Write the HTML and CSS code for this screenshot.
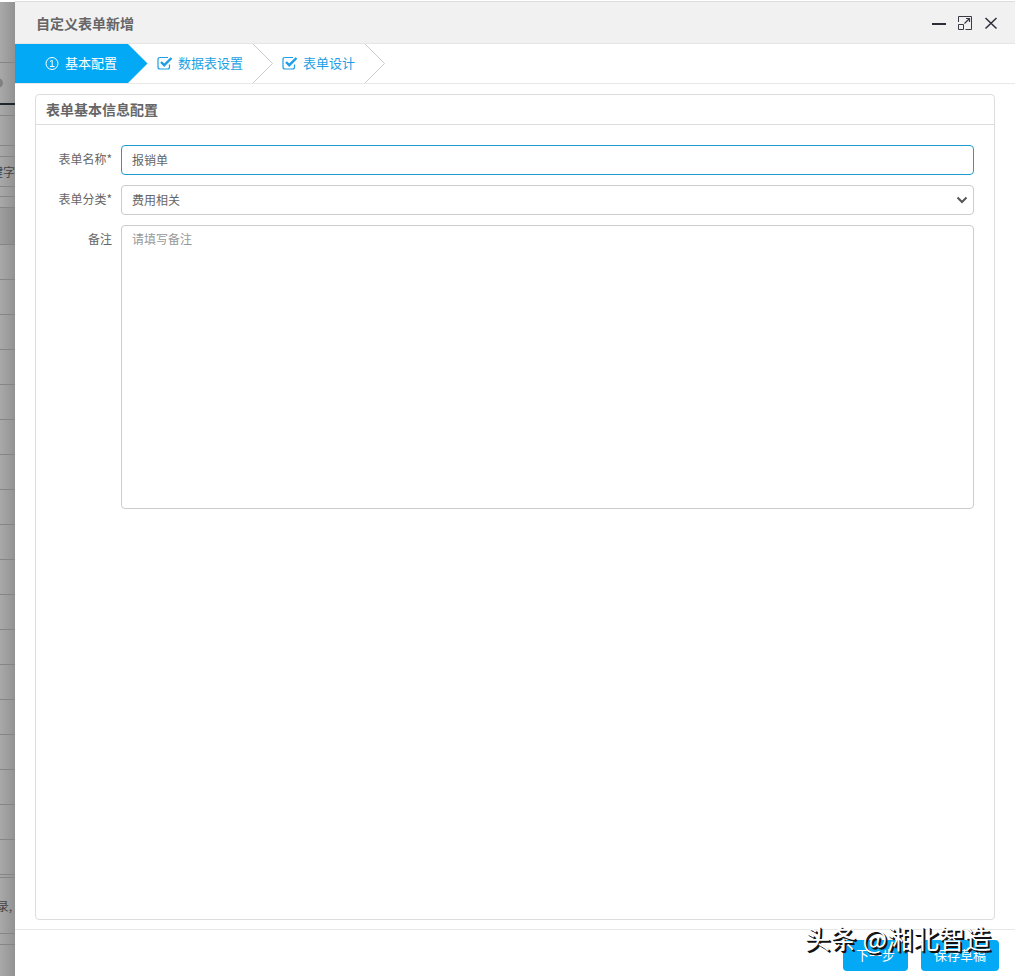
FILE: index.html
```html
<!DOCTYPE html>
<html lang="zh-CN">
<head>
  <meta charset="UTF-8">
  <title>自定义表单新增</title>
  <link rel="stylesheet" href="styles.css">
</head>
<body>
  <div class="page">
    <!-- dimmed list page behind the dialog -->
    <div class="backdrop">
      <div class="bg-row bg-top"></div>
      <div class="bg-row bg-tabs"><span class="bg-dot"></span></div>
      <div class="bg-row bg-gap"></div>
      <div class="bg-row bg-bar"></div>
      <div class="bg-row bg-gap"></div>
      <div class="bg-row bg-bar"><span class="bg-text">键字</span></div>
      <div class="bg-row bg-slim"></div>
      <div class="bg-row bg-gap"></div>
      <div class="bg-row bg-head"></div>
      <div class="bg-row"></div>
      <div class="bg-row"></div>
      <div class="bg-row"></div>
      <div class="bg-row"></div>
      <div class="bg-row"></div>
      <div class="bg-row"></div>
      <div class="bg-row"></div>
      <div class="bg-row"></div>
      <div class="bg-row"></div>
      <div class="bg-row"></div>
      <div class="bg-row"></div>
      <div class="bg-row"></div>
      <div class="bg-row"></div>
      <div class="bg-row"></div>
      <div class="bg-row"></div>
      <div class="bg-row"></div>
      <div class="bg-row"></div>
      <div class="bg-row"></div>
      <div class="bg-row bg-thin"></div>
      <div class="bg-row bg-pager"><span class="bg-text">录,</span></div>
      <div class="bg-row bg-gap"></div>
    </div>

    <div class="dialog">
      <div class="dialog-header">
        <h1 class="dialog-title">自定义表单新增</h1>
        <div class="window-tools">
          <button type="button" class="tool" aria-label="最小化">
            <svg width="16" height="16" viewBox="0 0 16 16"><path d="M1 9h14" stroke="#2e2d3c" stroke-width="2"/></svg>
          </button>
          <button type="button" class="tool" aria-label="最大化">
            <svg width="16" height="16" viewBox="0 0 16 16" fill="none" stroke="#3a3944"><path d="M1.500 7V1.500h13v13H8.500"/><path d="M1.500 9.500h5v5h-5z"/><path d="M7.500 8.500l5-5M9 3.500h3.500V7" stroke-width="1.200"/></svg>
          </button>
          <button type="button" class="tool" aria-label="关闭">
            <svg width="16" height="16" viewBox="0 0 16 16"><path d="M2.500 3l11 10.500M13.500 3l-11 10.500" stroke="#2e2d3c" stroke-width="1.500"/></svg>
          </button>
        </div>
      </div>

      <nav class="steps">
        <a href="#basic" class="step active">
          <svg class="step-icon" width="14" height="14" viewBox="0 0 14 14" fill="none" stroke="#fff"><circle cx="7" cy="7.500" r="6"/><path d="M5 5.500L7.200 4.300V10.500M5 10.500h4.500"/></svg>
          <span>基本配置</span>
          <svg class="step-arrow" width="20" height="39" viewBox="0 0 20 39"><path d="M0 0L19.500 19.500L0 39z" fill="#03a9f4"/></svg>
        </a>
        <a href="#table" class="step">
          <svg class="step-icon" width="16" height="14" viewBox="0 0 16 14" fill="none" stroke="#1c9fe4"><path d="M11 1.500H3Q1 1.500 1 3.500v7.500Q1 13 3 13h7.500Q12.500 13 12.500 11V8.500" stroke-width="1.200"/><path d="M4 6l3.200 3.200L14.500 2" stroke-width="2.400"/></svg>
          <span>数据表设置</span>
          <svg class="step-arrow" width="20" height="39" viewBox="0 0 20 39"><path d="M0 0L19.500 19.500L0 39" fill="none" stroke="#ccc"/></svg>
        </a>
        <a href="#design" class="step">
          <svg class="step-icon" width="16" height="14" viewBox="0 0 16 14" fill="none" stroke="#1c9fe4"><path d="M11 1.500H3Q1 1.500 1 3.500v7.500Q1 13 3 13h7.500Q12.500 13 12.500 11V8.500" stroke-width="1.200"/><path d="M4 6l3.200 3.200L14.500 2" stroke-width="2.400"/></svg>
          <span>表单设计</span>
          <svg class="step-arrow" width="20" height="39" viewBox="0 0 20 39"><path d="M0 0L19.500 19.500L0 39" fill="none" stroke="#ccc"/></svg>
        </a>
      </nav>

      <form class="panel" id="basic">
        <h2 class="panel-title">表单基本信息配置</h2>
        <div class="panel-body">
          <label for="formName">表单名称*</label>
          <input type="text" id="formName" class="field focus" value="报销单">
          <label for="formType">表单分类*</label>
          <div class="select-wrap">
            <select id="formType" class="field">
              <option>费用相关</option>
            </select>
            <svg class="caret" width="12" height="8" viewBox="0 0 12 8"><path d="M1.500 1.500L6 6l4.500-4.500" fill="none" stroke="#555" stroke-width="2"/></svg>
          </div>
          <label for="remark">备注</label>
          <textarea id="remark" class="field remark" placeholder="请填写备注"></textarea>
        </div>
      </form>

      <div class="dialog-footer">
        <button type="button" class="btn">下一步</button>
        <button type="button" class="btn">保存草稿</button>
        <span class="watermark">头条 @湘北智造</span>
      </div>
    </div>
  </div>
</body>
</html>
```

FILE: styles.css
```css
* {
  box-sizing: border-box;
}
body {
  margin: 0;
  background: #fff;
  color: #666;
  font-family: "Noto Sans CJK SC", "Noto Sans", sans-serif;
  font-size: 12px;
}
h1, h2 {
  margin: 0;
  font-size: 14px;
  font-weight: 700;
  color: #666;
}
button, input, select, textarea {
  font-family: inherit;
}
.page {
  display: flex;
  height: 100vh;
  padding-top: 1px;
}

/* page behind */
.backdrop {
  width: 15px;
  flex-shrink: 0;
  overflow: hidden;
  margin-top: 1px;
  background: linear-gradient(90deg, #a9a9a9, #929292);
}
.bg-row {
  display: flex;
  align-items: center;
  justify-content: flex-end;
  height: 35px;
  border-bottom: 1px solid #858585;
}
.bg-top {
  height: 61px;
}
.bg-tabs {
  justify-content: flex-start;
  height: 42px;
  border-bottom: 2px solid #1e282c;
}
.bg-dot {
  width: 10px;
  height: 10px;
  margin-left: -7px;
  border-radius: 50%;
  background: #808080;
}
.bg-gap {
  height: 11px;
}
.bg-slim {
  height: 10px;
}
.bg-bar {
  height: 30px;
}
.bg-head {
  height: 37px;
  background: rgba(0, 0, 0, 0.06);
}
.bg-thin {
  height: 3px;
}
.bg-pager {
  height: 56px;
  padding-right: 3px;
}
.bg-text {
  flex-shrink: 0;
  color: #444;
}

.dialog {
  display: flex;
  flex: 1;
  flex-direction: column;
  min-width: 0;
  background: #fff;
}
.dialog-header {
  display: flex;
  align-items: center;
  justify-content: space-between;
  height: 43px;
  padding: 0 16px 0 21px;
  background: #f1f1f1;
  border-top: 1px solid #ddd;
  border-bottom: 1px solid #e6e6e6;
}
.window-tools {
  display: flex;
  gap: 10px;
}
.tool {
  width: 16px;
  height: 16px;
  padding: 0;
  border: none;
  background: none;
  cursor: pointer;
}
.tool svg {
  display: block;
}

.steps {
  display: flex;
  height: 40px;
  border-bottom: 1px solid #e8e8e8;
}
.step {
  position: relative;
  display: flex;
  align-items: center;
  gap: 5px;
  padding: 0 10px 2px 29px;
  color: #1c9fe4;
  font-size: 13px;
  text-decoration: none;
}
.step.active {
  gap: 6px;
  padding-right: 11px;
  padding-left: 30px;
  background: #03a9f4;
  color: #fff;
}
.step-arrow {
  position: absolute;
  top: 0;
  left: 100%;
  z-index: 1;
}

.panel {
  flex: 1;
  margin: 10px 20px 9px;
  border: 1px solid #ddd;
  border-radius: 4px;
}
.panel-title {
  height: 30px;
  padding-left: 10px;
  line-height: 28px;
  border-bottom: 1px solid #ddd;
}
.panel-body {
  display: grid;
  grid-template-columns: 76px 1fr;
  gap: 10px 9px;
  padding: 20px;
  padding-left: 0;
}
.panel-body label {
  line-height: 28px;
  text-align: right;
}
.field {
  display: block;
  width: 100%;
  height: 30px;
  padding: 0 10px 2px;
  border: 1px solid #ccc;
  border-radius: 4px;
  outline: none;
  background: #fff;
  color: #666;
  font-size: 12px;
}
.field.focus {
  border-color: #1e9bd0;
}
.select-wrap {
  position: relative;
}
select.field {
  appearance: none;
}
.caret {
  position: absolute;
  top: 11px;
  right: 6px;
  pointer-events: none;
}
.remark {
  height: 284px;
  padding-top: 4px;
  line-height: 18px;
  resize: none;
}
.remark::placeholder {
  color: #999;
}

.dialog-footer {
  position: relative;
  display: flex;
  justify-content: flex-end;
  gap: 13px;
  height: 47px;
  padding: 10px 16px 0;
  border-top: 1px solid #e8e8e8;
}
.btn {
  height: 31px;
  padding: 0 13px 2px;
  border: none;
  border-radius: 4px;
  background: #03a9f4;
  color: #fff;
  font-size: 13px;
  cursor: pointer;
}
.watermark {
  position: absolute;
  top: -11px;
  right: 24px;
  color: #fff;
  font-size: 26px;
  line-height: 38px;
  white-space: nowrap;
  text-shadow: 1px 1px 0 #111, 2px 2px 0 #111;
  pointer-events: none;
}
```
